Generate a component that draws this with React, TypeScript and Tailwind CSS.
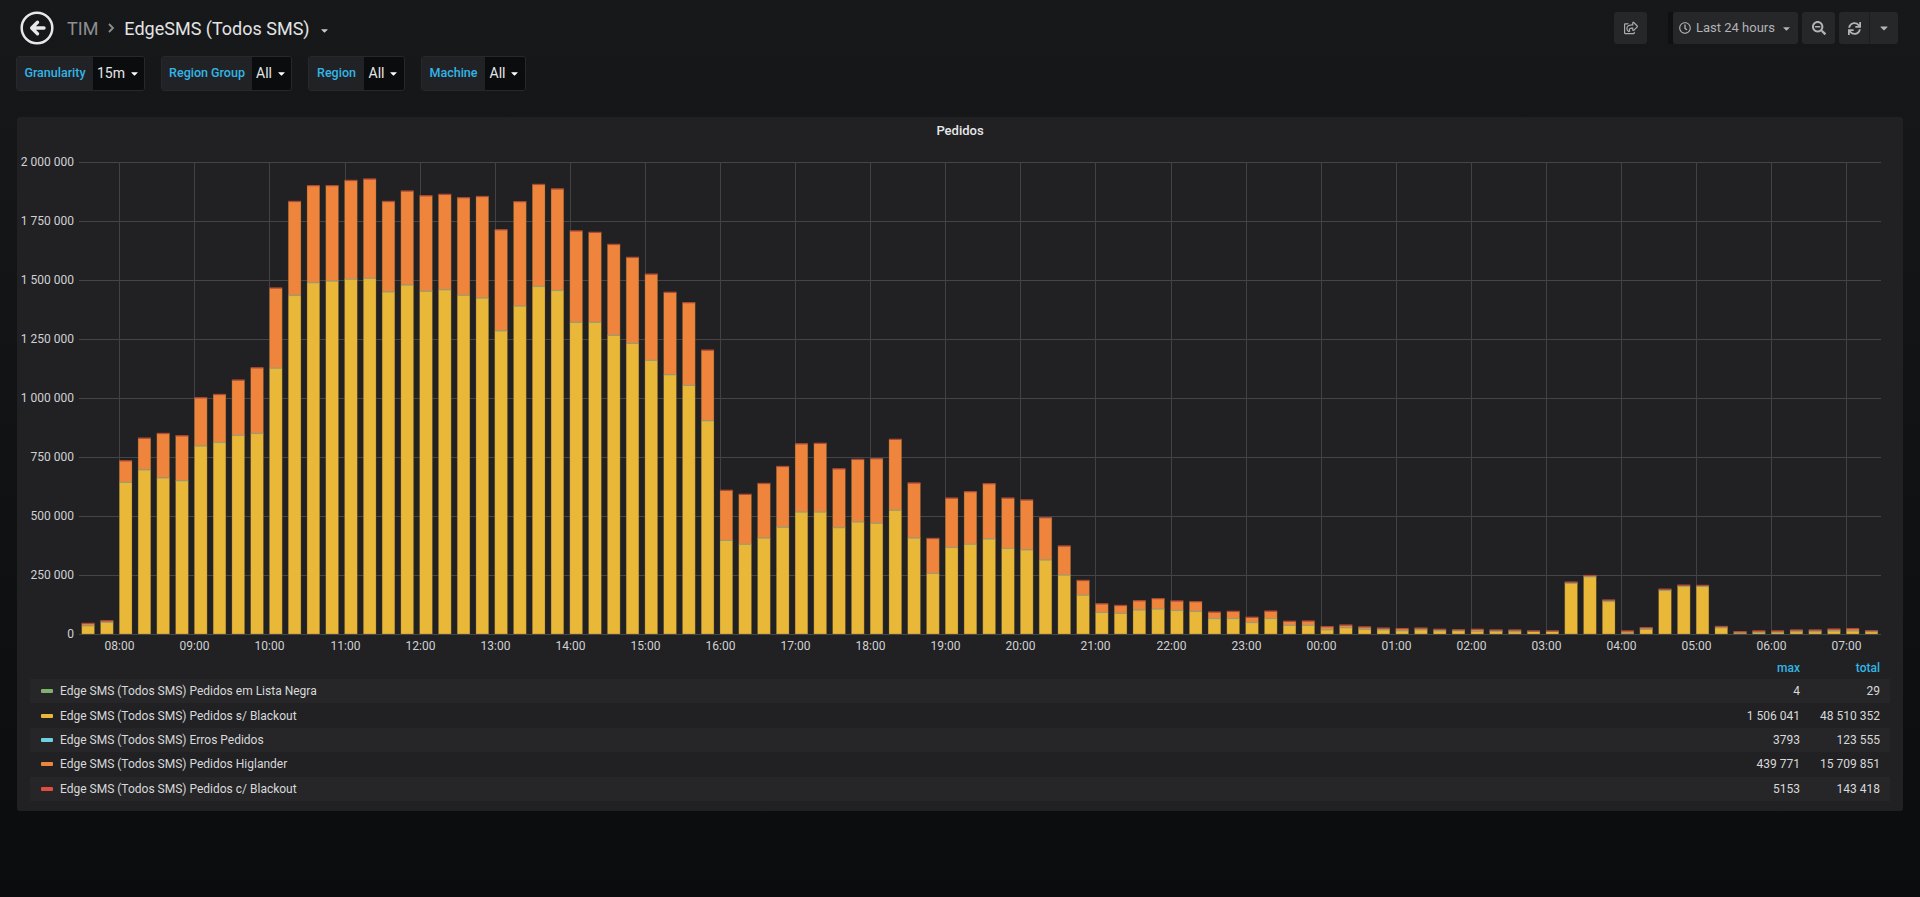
import React from "react";
import { FaRegShareSquare, FaRegClock, FaSearchMinus, FaSync, FaCaretDown } from "react-icons/fa";

const YELLOW = [35,50,643,696,662,650,797,812,842,850,1127,1435,1489,1496,1504,1508,1450,1479,1453,1459,1436,1424,1285,1390,
1473,1456,1321,1321,1266,1232,1160,1099,1054,904,397,381,407,453,517,517,451,475,470,525,407,257,367,381,
403,363,357,314,250,165,92,88,102,106,100,96,66,66,49,66,37,37,18,27,20,18,14,18,
14,14,11,11,10,11,11,215,243,138,4,20,185,203,202,27,4,7,7,10,10,13,13,10];
const TOTAL = [45,56,734,830,850,840,1001,1015,1076,1128,1466,1833,1900,1900,1922,1928,1833,1877,1857,1863,1849,1854,1713,1832,
1905,1886,1708,1702,1651,1596,1525,1448,1404,1203,609,592,638,710,806,808,700,740,743,825,640,405,576,603,
637,576,568,493,373,227,128,121,141,150,140,137,93,96,71,97,54,55,31,38,30,25,23,25,
20,18,20,17,17,13,13,220,248,144,13,27,190,207,206,32,10,13,13,17,17,21,23,14];

const HOURS = ["08:00","09:00","10:00","11:00","12:00","13:00","14:00","15:00","16:00","17:00","18:00","19:00","20:00","21:00","22:00","23:00","00:00","01:00","02:00","03:00","04:00","05:00","06:00","07:00"];
const YTICKS = [
  { v: 0, l: "0" },
  { v: 250, l: "250 000" },
  { v: 500, l: "500 000" },
  { v: 750, l: "750 000" },
  { v: 1000, l: "1 000 000" },
  { v: 1250, l: "1 250 000" },
  { v: 1500, l: "1 500 000" },
  { v: 1750, l: "1 750 000" },
  { v: 2000, l: "2 000 000" },
];

const ZERO = 489;
const yOf = (v: number) => ZERO - v * 0.236;
const HOUR0 = 102.3;
const HSTEP = 75.09;
const QSTEP = HSTEP / 4;

function Chart() {
  return (
    <svg width={1886} height={512} className="block" style={{ fontFamily: "Roboto, 'Liberation Sans', sans-serif" }}>
      {YTICKS.map((t) => (
        <g key={t.v}>
          <line x1={62} x2={1864} y1={yOf(t.v) + 0.5} y2={yOf(t.v) + 0.5} stroke="#454547" strokeWidth={1} />
          <text x={57} y={yOf(t.v) + 4} textAnchor="end" fontSize={12} fill="#d0d1d3">{t.l}</text>
        </g>
      ))}
      {HOURS.map((h, k) => {
        const x = Math.round(HOUR0 + k * HSTEP) + 0.5;
        return (
          <g key={h}>
            <line x1={x} x2={x} y1={yOf(2000)} y2={ZERO} stroke="#424244" strokeWidth={1} />
            <text x={x} y={505} textAnchor="middle" fontSize={12} fill="#d0d1d3">{h}</text>
          </g>
        );
      })}
      {YELLOW.map((y, i) => {
        const x = HOUR0 + (i - 2) * QSTEP;
        const t = TOTAL[i];
        const yy = yOf(y);
        const yt = yOf(t);
        return (
          <g key={i}>
            <rect x={x} y={yt} width={12.7} height={yy - yt} fill="#EF843C" />
            <rect x={x} y={yy} width={12.7} height={ZERO - yy} fill="#EAB839" />
            <rect x={x} y={yy - 0.5} width={12.7} height={1.2} fill="#9a9c72" />
            <rect x={x} y={yt - 0.6} width={12.7} height={1.3} fill="#c2483c" />
            <rect x={x} y={yt} width={12.7} height={ZERO - yt} fill="none" stroke="#6b5a2a" strokeOpacity={0.5} strokeWidth={0.6} />
          </g>
        );
      })}
    </svg>
  );
}

const LEGEND = [
  { name: "Edge SMS (Todos SMS) Pedidos em Lista Negra", color: "bg-[#7EB26D]", max: "4", total: "29" },
  { name: "Edge SMS (Todos SMS) Pedidos s/ Blackout", color: "bg-[#EAB839]", max: "1 506 041", total: "48 510 352" },
  { name: "Edge SMS (Todos SMS) Erros Pedidos", color: "bg-[#6ED0E0]", max: "3793", total: "123 555" },
  { name: "Edge SMS (Todos SMS) Pedidos Higlander", color: "bg-[#EF843C]", max: "439 771", total: "15 709 851" },
  { name: "Edge SMS (Todos SMS) Pedidos c/ Blackout", color: "bg-[#E24D42]", max: "5153", total: "143 418" },
];

function VarPicker({ label, value, lw, vw }: { label: string; value: string; lw: string; vw: string }) {
  return (
    <div className="flex h-[35px] border border-[#27282b] rounded-[3px] overflow-hidden">
      <div className={`${lw} flex items-center justify-center bg-[#212226] text-[#33b5e5] text-[12.5px] font-medium`}>{label}</div>
      <div className={`${vw} flex items-center justify-center gap-[4px] bg-[#0b0c0e] text-[#e6e6e6] text-[14px]`}>
        <span>{value}</span>
        <FaCaretDown className="text-[11px] text-white" />
      </div>
    </div>
  );
}

export default function App() {
  return (
    <div
      className="min-h-[897px] w-[1920px] bg-gradient-to-b from-[#17181a] to-[#0b0c0e] text-[#d8d9da]"
      style={{ fontFamily: "Roboto, 'Liberation Sans', sans-serif" }}
    >
      <div className="h-[56px] flex items-center justify-between pl-[20px] pr-[22px]">
        <div className="flex items-center">
          <svg width="34" height="34" viewBox="0 0 34 34">
            <circle cx="17" cy="17" r="15.3" fill="none" stroke="#e8e8e8" strokeWidth="2.5" />
            <path d="M24 17 H12 M17.5 11.2 L11.7 17 L17.5 22.8" fill="none" stroke="#e8e8e8" strokeWidth="3.4" strokeLinecap="round" strokeLinejoin="round" />
          </svg>
          <span className="ml-[13px] text-[18px] text-[#8e8f91]">TIM</span>
          <svg width="8" height="12" viewBox="0 0 8 12" className="ml-[9px] mr-[9px]">
            <path d="M2 2 L6 6 L2 10" fill="none" stroke="#8e8f91" strokeWidth="1.8" />
          </svg>
          <span className="text-[18px] text-[#e3e4e5]">EdgeSMS (Todos SMS)</span>
          <FaCaretDown className="ml-[9px] mt-[4px] text-[11px] text-[#c8c9ca]" />
        </div>
        <div className="flex items-center">
          <button className="w-[33px] h-[32px] flex items-center justify-center bg-[#262729] rounded-[3px] text-[#a9abae]">
            <FaRegShareSquare className="text-[14px]" />
          </button>
          <div className="ml-[21px] w-[5px] h-[32px] bg-[#0f1012]" />
          <button className="w-[125px] h-[32px] flex items-center justify-center gap-[5px] bg-[#262729] rounded-[3px] text-[#b1b3b6] text-[13px]">
            <FaRegClock className="text-[12px]" />
            <span>Last 24 hours</span>
            <FaCaretDown className="text-[11px] ml-[1px]" />
          </button>
          <button className="ml-[4px] w-[33px] h-[32px] flex items-center justify-center bg-[#262729] rounded-[3px] text-[#b1b3b6]">
            <FaSearchMinus className="text-[14px]" />
          </button>
          <div className="ml-[4px] flex h-[32px] bg-[#262729] rounded-[3px] text-[#b1b3b6]">
            <div className="w-[31px] flex items-center justify-center border-r border-[#1c1d1f]">
              <FaSync className="text-[13px]" />
            </div>
            <div className="w-[28px] flex items-center justify-center">
              <FaCaretDown className="text-[12px]" />
            </div>
          </div>
        </div>
      </div>

      <div className="ml-[16px] flex gap-[16px]">
        <VarPicker label="Granularity" value="15m" lw="w-[76px]" vw="w-[51px]" />
        <VarPicker label="Region Group" value="All" lw="w-[90px]" vw="w-[39px]" />
        <VarPicker label="Region" value="All" lw="w-[55px]" vw="w-[40px]" />
        <VarPicker label="Machine" value="All" lw="w-[63px]" vw="w-[40px]" />
      </div>

      <div className="mt-[26px] mx-[17px] h-[694px] bg-[#212124] rounded-[3px] flex flex-col">
        <div className="h-[28px] flex items-center justify-center text-[13px] font-medium text-[#e6e7e8]">Pedidos</div>
        <Chart />
        <div className="mx-[13px] flex flex-col text-[12px]">
          <div className="h-[22px] flex items-center text-[#33b5e5] font-medium">
            <div className="flex-1" />
            <div className="w-[100px] text-right">max</div>
            <div className="w-[90px] pr-[10px] text-right">total</div>
          </div>
          {LEGEND.map((r, i) => (
            <div key={r.name} className={`h-[24.4px] flex items-center ${i % 2 === 0 ? "bg-[#262628]" : "bg-[#212124]"}`}>
              <div className={`ml-[11px] w-[12px] h-[4px] rounded-[1px] ${r.color}`} />
              <div className="ml-[7px] flex-1 text-[#d8d9da]">{r.name}</div>
              <div className="w-[100px] text-right text-[#d8d9da]">{r.max}</div>
              <div className="w-[90px] pr-[10px] text-right text-[#d8d9da]">{r.total}</div>
            </div>
          ))}
        </div>
      </div>
    </div>
  );
}
